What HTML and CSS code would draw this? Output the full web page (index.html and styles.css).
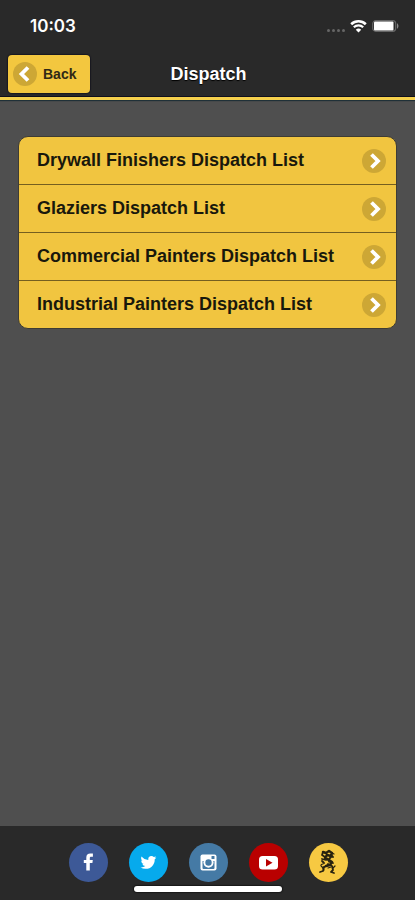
FILE: index.html
```html
<!DOCTYPE html>
<html lang="en">
<head>
<meta charset="utf-8">
<meta name="viewport" content="width=device-width, initial-scale=1">
<title>Dispatch</title>
<link rel="stylesheet" href="styles.css">
</head>
<body>
<header class="top">
  <div class="status">
    <span class="time">10:03</span>
    <div class="indicators">
      <span class="signal"><i></i><i></i><i></i><i></i></span>
      <svg class="wifi" viewBox="0 0 17 14" aria-hidden="true">
        <path d="M1.200 5.200a10.500 10.500 0 0 1 14.600 0" fill="none" stroke="#fff" stroke-width="2.600"/>
        <path d="M3.800 8.300a6.800 6.800 0 0 1 9.400 0" fill="none" stroke="#fff" stroke-width="2.200"/>
        <path d="M5.800 10.700a4 4 0 0 1 5.400 0L8.500 13.500z" fill="#fff"/>
      </svg>
      <svg class="battery" viewBox="0 0 28 12" aria-hidden="true">
        <rect x=".7" y=".7" width="23" height="10.600" rx="3" fill="none" stroke="#666" stroke-width="1.200"/>
        <rect x="2" y="1.500" width="19.500" height="9" rx="1" fill="#fff"/>
        <path d="M25 3q3 3 0 6z" fill="#888"/>
      </svg>
    </div>
  </div>
  <nav class="bar">
    <button class="back" type="button">
      <svg class="disc" viewBox="0 0 24 24" aria-hidden="true"><circle cx="12" cy="12" r="12"/><path d="M15 5.500L8.500 12l6.500 6.500"/></svg>
      <span>Back</span>
    </button>
    <h1>Dispatch</h1>
  </nav>
</header>
<main>
  <ul class="list">
    <li><a href="#drywall"><span>Drywall Finishers Dispatch List</span><svg class="disc" viewBox="0 0 24 24" aria-hidden="true"><circle cx="12" cy="12" r="12"/><path d="M9.500 5.500L16 12l-6.500 6.500"/></svg></a></li>
    <li><a href="#glaziers"><span>Glaziers Dispatch List</span><svg class="disc" viewBox="0 0 24 24" aria-hidden="true"><circle cx="12" cy="12" r="12"/><path d="M9.500 5.500L16 12l-6.500 6.500"/></svg></a></li>
    <li><a href="#commercial"><span>Commercial Painters Dispatch List</span><svg class="disc" viewBox="0 0 24 24" aria-hidden="true"><circle cx="12" cy="12" r="12"/><path d="M9.500 5.500L16 12l-6.500 6.500"/></svg></a></li>
    <li><a href="#industrial"><span>Industrial Painters Dispatch List</span><svg class="disc" viewBox="0 0 24 24" aria-hidden="true"><circle cx="12" cy="12" r="12"/><path d="M9.500 5.500L16 12l-6.500 6.500"/></svg></a></li>
  </ul>
</main>
<footer class="social">
  <a class="facebook" href="#facebook" aria-label="Facebook">
    <svg viewBox="0 0 39 39" aria-hidden="true"><path d="M17.300 27.500v-7.400h-2.500v-3.100h2.500v-2.200c0-3 1.500-4.300 4-4.300h2.600v3.200h-1.700c-1.100 0-1.400.5-1.400 1.500V17h3l-.4 3.100h-2.600v7.400z" fill="#fff"/></svg>
  </a>
  <a class="twitter" href="#twitter" aria-label="Twitter">
    <svg viewBox="0 0 39 39" aria-hidden="true"><path transform="translate(11.500 11.500) scale(.66)" d="M23.953 4.570a10 10 0 0 1-2.825.775 4.958 4.958 0 0 0 2.163-2.723c-.951.555-2.005.959-3.127 1.184a4.920 4.920 0 0 0-8.384 4.482C7.690 8.095 4.067 6.130 1.640 3.162a4.822 4.822 0 0 0-.666 2.475c0 1.710.87 3.213 2.188 4.096a4.904 4.904 0 0 1-2.228-.616v.06a4.923 4.923 0 0 0 3.946 4.827 4.996 4.996 0 0 1-2.212.085 4.936 4.936 0 0 0 4.604 3.417 9.867 9.867 0 0 1-6.102 2.105c-.39 0-.779-.023-1.170-.067a13.995 13.995 0 0 0 7.557 2.209c9.053 0 13.998-7.496 13.998-13.985 0-.21 0-.42-.015-.63A9.935 9.935 0 0 0 24 4.590z" fill="#fff"/></svg>
  </a>
  <a class="instagram" href="#instagram" aria-label="Instagram">
    <svg viewBox="0 0 39 39" aria-hidden="true"><rect x="11.500" y="11.500" width="16" height="16" rx="2" fill="#fff"/><path d="M13.500 18v7a1 1 0 0 0 1 1h10a1 1 0 0 0 1-1v-7h-1.500a4.800 4.800 0 1 1-9 0z" fill="#457aa5"/><circle cx="19.500" cy="19.500" r="5" fill="#fff"/><circle cx="19.500" cy="19.500" r="3.200" fill="#457aa5"/><rect x="22.500" y="13" width="3" height="3" rx=".5" fill="#457aa5"/></svg>
  </a>
  <a class="youtube" href="#youtube" aria-label="YouTube">
    <svg viewBox="0 0 39 39" aria-hidden="true"><rect x="10" y="13" width="19" height="13.500" rx="3.500" fill="#fff"/><path d="M17 16l6.500 3.700-6.500 3.700z" fill="#b90000"/></svg>
  </a>
  <a class="lion" href="#union" aria-label="Union home">
    <svg viewBox="0 0 39 39" fill="none" stroke="#29230f" stroke-linecap="round" stroke-linejoin="round" aria-hidden="true"><path d="M14 9l3 1 3-2 3 2-1 3-4-1-2 3 4 2 3 2-2 3-4 1" stroke-width="2.400"/><path d="M14 9l-1 3 3 2m-3 2l4 1m-2 3l-2-2m6 3l4 2 1 4-2 2 3 1m-6-8l-4 2-1 4-3 1m9-13l3-3 1 1m-3 5l3 1" stroke-width="1.800"/><path d="M16 24c-5 1-5-3-2-3m-1 3l2 3m3-12l2 4m3-9l2 1m-1 14l2-2m-7 2l3-1" stroke-width="1.200"/></svg>
  </a>
  <div class="home-bar"></div>
</footer>
</body>
</html>
```
FILE: styles.css
```css
* { box-sizing: border-box; }

body {
  margin: 0;
  min-height: 100vh;
  display: flex;
  flex-direction: column;
  background: #4f4f4f;
  color: #19180c;
  font-family: "Liberation Sans", Arial, sans-serif;
  font-weight: bold;
}

.top {
  background: #292929;
  border-bottom: 3px solid #f5d04c;
  box-shadow: 0 1px 1px #1f3038, inset 0 -1px #10101c;
}

.status {
  height: 52px;
  padding: 0 15px 0 30px;
  display: flex;
  align-items: center;
  justify-content: space-between;
  color: #fff;
}

.time {
  font-family: Inter, sans-serif;
  font-size: 17px;
  font-weight: 600;
}

.indicators { display: flex; align-items: center; gap: 5px; }
.signal { display: flex; gap: 2px; padding-top: 8px; }
.signal i { width: 3px; height: 3px; border-radius: 50%; background: #666; }
.wifi { width: 17px; height: 14px; }
.battery { width: 28px; height: 12px; }

.bar {
  padding: 3px 6px 4px 8px;
  display: grid;
  grid-template-columns: 1fr auto 1fr;
  align-items: center;
}

.back {
  justify-self: start;
  height: 38px;
  padding: 0 14px 0 5px;
  display: flex;
  align-items: center;
  gap: 6px;
  border: 0;
  border-radius: 4px;
  background: #f3c73f;
  box-shadow: 0 0 1px 1px #181820;
  color: #302916;
  font: bold 14px "Liberation Sans", Arial, sans-serif;
}

h1 {
  margin: 0;
  color: #fff;
  font-size: 18px;
  line-height: 24px;
  text-shadow: 0 1px 1px #000;
}

.disc { flex: none; width: 24px; height: 24px; }
.disc circle { fill: #cda735; }
.disc path { fill: none; stroke: #fff; stroke-width: 3.8; }

main { flex: 1; padding: 36px 18px; }

.list {
  margin: 0;
  padding: 0;
  list-style: none;
  border: 1px solid #3e3c34;
  border-radius: 10px;
  background: #f1c540;
  overflow: hidden;
}

.list li + li { border-top: 1px solid #755f20; }

.list a {
  min-height: 47px;
  padding: 0 10px 0 18px;
  display: flex;
  align-items: center;
  justify-content: space-between;
  color: inherit;
  font-size: 18px;
  text-decoration: none;
}

.social {
  position: relative;
  height: 74px;
  padding: 17px 0 0 2px;
  display: flex;
  justify-content: center;
  gap: 21px;
  background: #292929;
}

.social a { width: 39px; height: 39px; border-radius: 50%; }
.social svg { display: block; width: 100%; height: 100%; }
.facebook { background: #3d5997; }
.twitter { background: #06aaed; }
.instagram { background: #457aa5; }
.youtube { background: #b90000; }
.lion { background: #f7c942; }

.home-bar {
  position: absolute;
  bottom: 8px;
  left: 50%;
  width: 148px;
  height: 6px;
  margin-left: -74px;
  border-radius: 3px;
  background: #fff;
  box-shadow: 0 0 1px 1px #181818;
}
```
